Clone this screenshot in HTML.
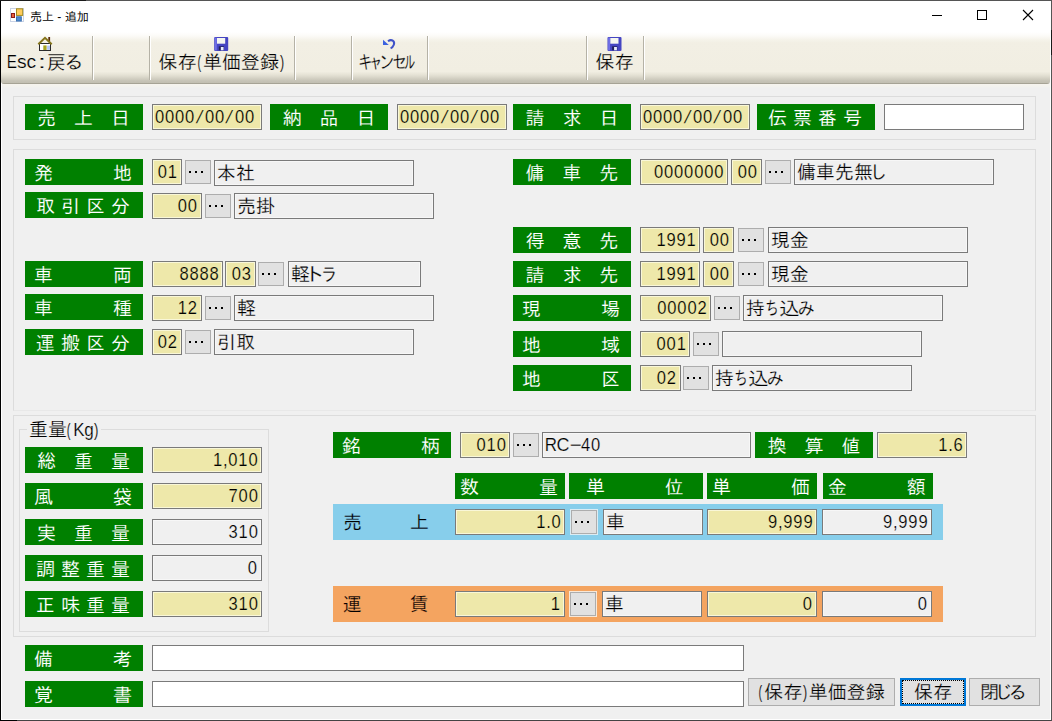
<!DOCTYPE html>
<html lang="ja">
<head>
<meta charset="utf-8">
<title>売上 - 追加</title>
<style>
*{margin:0;padding:0;box-sizing:border-box}
html,body{width:1052px;height:721px;overflow:hidden;background:#f0f0f0}
body{position:relative;font-family:"Liberation Sans","IPAGothic",sans-serif;font-size:19px;color:#000}
.a{position:absolute}
#win{position:absolute;left:0;top:0;width:1052px;height:721px;border:1px solid #555;border-left-color:#000;border-bottom-color:#444}
#win i{position:absolute;left:0;top:31px;width:1050px;height:688px;border:1px solid #fff;border-top:0}
#title{position:absolute;left:1px;top:1px;width:1050px;height:31px;background:#fff}
#title .t{position:absolute;left:29px;top:8px;font-size:12px;line-height:16px;white-space:pre}
#tb{position:absolute;left:1px;top:32px;width:1049px;height:52px;border-radius:0 0 3px 3px;
 background:linear-gradient(to bottom,#ffffff 0,#fcfbf8 7%,#f5f3ea 15%,#f2efe4 21%,#f1eee2 76%,#e4e1d4 83%,#d4d1c4 89%,#c6c3b6 94%,#c2bfb2 97.5%,#a6a395 98%,#a6a395 100%)}
.sep{position:absolute;top:36px;width:2px;height:44px;border-left:1px solid #b5b2a6;border-right:1px solid #fff}
.tbt{position:absolute;top:52px;height:22px;line-height:22px;white-space:nowrap;font-size:19px}
.gb{position:absolute;border:1px solid #dcdcdc}
.lb{position:absolute;height:26px;background:#008000;color:#fff;line-height:30px;white-space:pre;text-align:center;font-size:19px;word-spacing:.72px;overflow:hidden}
.in{position:absolute;height:26px;border:1px solid #7a7a7a;box-shadow:inset 0 0 0 1px #f9f7d8;background:#eee8aa;line-height:24px;white-space:pre;font-size:18px;overflow:hidden;padding:0 3px 0 2px}
.r{text-align:right}
.ro{background:#f0f0f0;box-shadow:inset 0 0 0 1px #f7f7f7}
.wh{background:#fff;box-shadow:none}
.tx{font-size:19px;line-height:25px}
.bt{position:absolute;height:24px;width:26px;border:1px solid #adadad;background:#e1e1e1}
.bt i{position:absolute;top:10px;width:2px;height:2px;background:#000}
.bb{position:absolute;height:28px;border:1px solid #adadad;background:#e1e1e1;line-height:27px;font-size:19px;white-space:nowrap}
.band{position:absolute;height:36px;left:333px;width:610px;line-height:38px;font-size:19px;white-space:pre;word-spacing:.72px}
body{-webkit-text-stroke:.2px #f0f0f0}
#title{-webkit-text-stroke:0}
.tbt{-webkit-text-stroke-color:#f1eee3}
.lb{-webkit-text-stroke:.1px #008000}
.in{-webkit-text-stroke:.2px #eee8aa}
.in.ro{-webkit-text-stroke-color:#f0f0f0}
.in.tx{-webkit-text-stroke-width:.2px}
.bb{-webkit-text-stroke-color:#e1e1e1}
.h{-webkit-text-stroke-width:.2px}
.d{display:inline-block;transform:scaleX(.92);letter-spacing:.87px;white-space:pre}
.r .d{transform-origin:100% 50%;margin-right:-.2px}
.dl{transform-origin:0 50%}
.k{display:inline-block;white-space:nowrap;transform-origin:0 50%}
.h{display:inline-block;white-space:nowrap;transform-origin:0 50%;font-size:18px}
.tbt .h,.bb .h{position:relative;top:-1px}
</style>
</head>
<body>
<div id="win"><i></i></div>
<div class="a" style="left:0;top:0;width:86px;height:1px;background:#1a1a1a"></div>
<div class="a" style="left:1051px;top:30px;width:1px;height:25px;background:#1a1a1a"></div>
<div class="a" style="left:0;top:720px;width:17px;height:1px;background:#000"></div>
<div id="title"><div class="t">売上 - 追加</div></div>
<div class="a" style="left:2px;top:84px;width:1048px;height:4px;background:linear-gradient(#f6f4ee,#f4f3ee 50%,#f0f0f0)"></div>
<div id="tb"></div>
<div class="sep" style="left:92px"></div>
<div class="sep" style="left:149px"></div>
<div class="sep" style="left:294px"></div>
<div class="sep" style="left:351px"></div>
<div class="sep" style="left:427px"></div>
<div class="sep" style="left:586px"></div>
<div class="sep" style="left:643px"></div>
<svg class="a" style="left:0;top:0" width="1052" height="90" viewBox="0 0 1052 90">
<g><rect x="10.5" y="8.5" width="13" height="13" fill="#fff" stroke="#c9d3e6"/>
<rect x="11.5" y="13.5" width="3" height="4" fill="#e8623a" stroke="#8b1a1a"/>
<rect x="16.5" y="8.8" width="6.2" height="6.6" fill="#ffcc5c" stroke="#a48b1e"/>
<rect x="16.5" y="16.8" width="4.8" height="4.2" fill="#4f8bd0" stroke="#3b70b0"/></g>
<g><rect x="39.5" y="43.5" width="11" height="7" fill="#fff" stroke="#2a2a2a"/>
<rect x="48.3" y="37" width="1.8" height="4.6" fill="#5a2d0c"/>
<path d="M38.3 44.2 L45 37.8 L51.7 44.2" fill="none" stroke="#85741a" stroke-width="2"/>
<rect x="43.3" y="45.4" width="3.3" height="4.6" fill="#a7a41f"/><rect x="47.1" y="45.6" width="2.9" height="4.2" fill="#b4c6f2"/></g>
<g transform="translate(214.2 37)"><rect x="0" y="0" width="14" height="14" rx="1" fill="#4545c2"/><rect x="0.6" y="0.6" width="2" height="12.8" fill="#6f6fe6"/><rect x="2.8" y="1" width="8.2" height="5.7" fill="#f4f6f0"/><rect x="4.6" y="9.3" width="5.2" height="4" fill="#20205a"/><rect x="6.6" y="10" width="2.8" height="3.3" fill="#e8ecff"/></g>
<g transform="translate(607.5 37)"><rect x="0" y="0" width="14" height="14" rx="1" fill="#4545c2"/><rect x="0.6" y="0.6" width="2" height="12.8" fill="#6f6fe6"/><rect x="2.8" y="1" width="8.2" height="5.7" fill="#f4f6f0"/><rect x="4.6" y="9.3" width="5.2" height="4" fill="#20205a"/><rect x="6.6" y="10" width="2.8" height="3.3" fill="#e8ecff"/></g>
<g><path d="M388 41.3 C391.5 38.6 395.2 41.2 393.8 44.8 C393.2 46.6 392 47.8 390.6 48.4" fill="none" stroke="#3f52c8" stroke-width="2"/>
<path d="M383 39.7 L383 44.9 L388.8 44.9 Z" fill="#3c62e0"/></g>
<g stroke="#000" stroke-width="1" fill="none"><path d="M932 15.5 H942"/><rect x="977.5" y="10.5" width="9" height="9"/><path d="M1023 10 L1033 20 M1033 10 L1023 20" stroke-width="1.1"/></g>
</svg>
<div class="tbt" style="left:7px"><span class="h" style="width:10px;transform:translateX(-0.35px) scaleX(0.85)">E</span><span class="h" style="width:10px;transform:translateX(-0.07px) scaleX(1.07)">s</span><span class="h" style="width:10px;transform:translateX(-0.57px) scaleX(1.07)">c</span><span class="h" style="width:9.5px;transform:translateX(0.67px) scaleX(1.67)">:</span>戻<span class="k" style="width:15px;transform:translateX(-2.12px) scaleX(1.04)">る</span></div>
<div class="tbt" style="left:158.5px">保存<span class="h" style="width:6.5px;transform:translateX(0.4px) scaleX(0.6)">(</span>単価登録<span class="h" style="width:6.5px;transform:translateX(1px) scaleX(0.7)">)</span></div>
<div class="tbt" style="left:358.8px"><span class="k" style="width:12.5px;transform:translateX(-1.02px) scaleX(0.76)">キ</span><span class="k" style="width:9.5px;transform:translateX(-2.07px) scaleX(0.72)">ャ</span><span class="k" style="width:12px;transform:translateX(-1.99px) scaleX(0.83)">ン</span><span class="k" style="width:12.3px;transform:translateX(-0.84px) scaleX(0.77)">セ</span><span class="k" style="width:10.5px;transform:translateX(-0.66px) scaleX(0.58)">ル</span></div>
<div class="tbt" style="left:595.5px">保存</div>
<div class="gb" style="left:13px;top:96px;width:1023px;height:44px"></div>
<div class="gb" style="left:13px;top:149px;width:1023px;height:262px;border-bottom-color:#e8e8e8"></div>
<div class="gb" style="left:13px;top:415px;width:1023px;height:222px"></div>
<div class="gb" style="left:19px;top:429px;width:250px;height:203px"></div>
<div class="a" style="left:27px;top:420px;width:74px;height:20px;background:#f0f0f0;line-height:20px;padding-left:2px;white-space:nowrap">重量<span class="h" style="width:6.5px;transform:translateX(-0.32px) scaleX(0.62)">(</span><span class="h" style="width:11px;transform:translateX(-0.74px) scaleX(0.94)">K</span><span class="h" style="width:9px;transform:translateX(-0.85px) scaleX(0.95)">g</span><span class="h" style="width:6.5px;transform:translateX(0.1px) scaleX(0.74)">)</span></div>
<div class="lb" style="left:25px;top:104px;width:118px;padding-right:1px">売   上   日</div>
<div class="in" style="left:152px;top:104px;width:110px;"><span class="d dl" style="margin-left:-.3px">0000<span class="h" style="width:10.87px;letter-spacing:0;transform:translateX(2px) skewX(-15deg);transform-origin:50% 50%">/</span>00<span class="h" style="width:10.87px;letter-spacing:0;transform:translateX(2px) skewX(-15deg);transform-origin:50% 50%">/</span>00</span></div>
<div class="lb" style="left:270px;top:104px;width:118px;">納   品   日</div>
<div class="in" style="left:397px;top:104px;width:110px;"><span class="d dl" style="margin-left:-.3px">0000<span class="h" style="width:10.87px;letter-spacing:0;transform:translateX(2px) skewX(-15deg);transform-origin:50% 50%">/</span>00<span class="h" style="width:10.87px;letter-spacing:0;transform:translateX(2px) skewX(-15deg);transform-origin:50% 50%">/</span>00</span></div>
<div class="lb" style="left:513px;top:104px;width:118px;">請   求   日</div>
<div class="in" style="left:640px;top:104px;width:110px;"><span class="d dl" style="margin-left:-.3px">0000<span class="h" style="width:10.87px;letter-spacing:0;transform:translateX(2px) skewX(-15deg);transform-origin:50% 50%">/</span>00<span class="h" style="width:10.87px;letter-spacing:0;transform:translateX(2px) skewX(-15deg);transform-origin:50% 50%">/</span>00</span></div>
<div class="lb" style="left:757px;top:104px;width:118px;padding-right:2px">伝 票 番 号</div>
<div class="in wh" style="left:884px;top:104px;width:140px;"></div>
<div class="lb" style="left:25px;top:159px;width:118px;padding-right:2px">発          地</div>
<div class="in r" style="left:152px;top:159px;width:30px;"><span class="d">01</span></div>
<div class="bt" style="left:185px;top:160px"><i style="left:3px"></i><i style="left:9px"></i><i style="left:15px"></i></div>
<div class="in ro tx" style="left:214px;top:160px;width:200px;">本社</div>
<div class="lb" style="left:25px;top:192px;width:118px;padding-right:2px">取 引 区 分</div>
<div class="in r" style="left:152px;top:193px;width:50px;"><span class="d">00</span></div>
<div class="bt" style="left:205px;top:194px"><i style="left:3px"></i><i style="left:9px"></i><i style="left:15px"></i></div>
<div class="in ro tx" style="left:234px;top:193px;width:200px;">売掛</div>
<div class="lb" style="left:25px;top:261px;width:118px;padding-right:2px">車          両</div>
<div class="in r" style="left:152px;top:261px;width:71px;"><span class="d">8888</span></div>
<div class="in r" style="left:225px;top:261px;width:31px;"><span class="d">03</span></div>
<div class="bt" style="left:258px;top:262px"><i style="left:3px"></i><i style="left:9px"></i><i style="left:15px"></i></div>
<div class="in ro tx" style="left:288px;top:261px;width:133px;">軽<span class="k" style="width:12px;transform:translateX(-6.56px) scaleX(1.14)">ト</span><span class="k" style="width:14px;transform:translateX(-0.67px) scaleX(0.84)">ラ</span></div>
<div class="lb" style="left:25px;top:294px;width:118px;padding-right:2px">車          種</div>
<div class="in r" style="left:152px;top:295px;width:50px;"><span class="d">12</span></div>
<div class="bt" style="left:205px;top:296px"><i style="left:3px"></i><i style="left:9px"></i><i style="left:15px"></i></div>
<div class="in ro tx" style="left:234px;top:295px;width:200px;">軽</div>
<div class="lb" style="left:25px;top:329px;width:118px;padding-right:2px">運 搬 区 分</div>
<div class="in r" style="left:152px;top:329px;width:30px;"><span class="d">02</span></div>
<div class="bt" style="left:185px;top:330px"><i style="left:3px"></i><i style="left:9px"></i><i style="left:15px"></i></div>
<div class="in ro tx" style="left:214px;top:329px;width:200px;">引取</div>
<div class="lb" style="left:513px;top:159px;width:118px;">傭   車   先</div>
<div class="in r" style="left:640px;top:159px;width:88px;"><span class="d">0000000</span></div>
<div class="in r" style="left:731px;top:159px;width:31px;"><span class="d">00</span></div>
<div class="bt" style="left:765px;top:160px"><i style="left:3px"></i><i style="left:9px"></i><i style="left:15px"></i></div>
<div class="in ro tx" style="left:794px;top:159px;width:200px;">傭車先無<span class="k" style="width:13px;transform:translateX(-3.82px) scaleX(0.96)">し</span></div>
<div class="lb" style="left:513px;top:227px;width:118px;">得   意   先</div>
<div class="in r" style="left:640px;top:227px;width:60px;"><span class="d">1991</span></div>
<div class="in r" style="left:703px;top:227px;width:31px;"><span class="d">00</span></div>
<div class="bt" style="left:738px;top:228px"><i style="left:3px"></i><i style="left:9px"></i><i style="left:15px"></i></div>
<div class="in ro tx" style="left:768px;top:227px;width:200px;">現金</div>
<div class="lb" style="left:513px;top:261px;width:118px;">請   求   先</div>
<div class="in r" style="left:640px;top:261px;width:60px;"><span class="d">1991</span></div>
<div class="in r" style="left:703px;top:261px;width:31px;"><span class="d">00</span></div>
<div class="bt" style="left:738px;top:262px"><i style="left:3px"></i><i style="left:9px"></i><i style="left:15px"></i></div>
<div class="in ro tx" style="left:768px;top:261px;width:200px;">現金</div>
<div class="lb" style="left:513px;top:295px;width:118px;padding-right:2px">現          場</div>
<div class="in r" style="left:640px;top:295px;width:71px;"><span class="d">00002</span></div>
<div class="bt" style="left:714px;top:296px"><i style="left:3px"></i><i style="left:9px"></i><i style="left:15px"></i></div>
<div class="in ro tx" style="left:743px;top:295px;width:200px;">持<span class="k" style="width:13.5px;transform:translateX(0.27px) scaleX(0.71)">ち</span><span class="k" style="width:19px;transform:translateX(0.12px) scaleX(1.08)">込</span><span class="k" style="width:17px;transform:translateX(-0.51px) scaleX(0.91)">み</span></div>
<div class="lb" style="left:513px;top:331px;width:118px;padding-right:2px">地          域</div>
<div class="in r" style="left:640px;top:331px;width:50px;"><span class="d">001</span></div>
<div class="bt" style="left:693px;top:332px"><i style="left:3px"></i><i style="left:9px"></i><i style="left:15px"></i></div>
<div class="in ro tx" style="left:722px;top:331px;width:200px;"></div>
<div class="lb" style="left:513px;top:365px;width:118px;padding-right:2px">地          区</div>
<div class="in r" style="left:640px;top:365px;width:41px;"><span class="d">02</span></div>
<div class="bt" style="left:683px;top:366px"><i style="left:3px"></i><i style="left:9px"></i><i style="left:15px"></i></div>
<div class="in ro tx" style="left:712px;top:365px;width:200px;">持<span class="k" style="width:13.5px;transform:translateX(0.27px) scaleX(0.71)">ち</span><span class="k" style="width:19px;transform:translateX(0.12px) scaleX(1.08)">込</span><span class="k" style="width:17px;transform:translateX(-0.51px) scaleX(0.91)">み</span></div>
<div class="lb" style="left:25px;top:447px;width:118px;padding-right:1px">総   重   量</div>
<div class="in r" style="left:152px;top:447px;width:110px;"><span class="d">1,010</span></div>
<div class="lb" style="left:25px;top:483px;width:118px;padding-right:2px">風          袋</div>
<div class="in r" style="left:152px;top:483px;width:110px;"><span class="d">700</span></div>
<div class="lb" style="left:25px;top:519px;width:118px;padding-right:1px">実   重   量</div>
<div class="in r ro" style="left:152px;top:519px;width:110px;"><span class="d">310</span></div>
<div class="lb" style="left:25px;top:555px;width:118px;padding-right:2px">調 整 重 量</div>
<div class="in r ro" style="left:152px;top:555px;width:110px;"><span class="d">0</span></div>
<div class="lb" style="left:25px;top:591px;width:118px;padding-right:2px">正 味 重 量</div>
<div class="in r" style="left:152px;top:591px;width:110px;"><span class="d">310</span></div>
<div class="lb" style="left:333px;top:432px;width:118px;padding-right:2px">銘          柄</div>
<div class="in r" style="left:460px;top:432px;width:50px;"><span class="d">010</span></div>
<div class="bt" style="left:513px;top:433px"><i style="left:3px"></i><i style="left:9px"></i><i style="left:15px"></i></div>
<div class="in ro" style="left:542px;top:432px;width:209px;"><span class="h" style="width:12px;transform:translateX(-0.24px) scaleX(0.94)">R</span><span class="h" style="width:12.5px;transform:translateX(-0.6px) scaleX(1)">C</span><span class="h" style="width:11.5px;transform:translateX(-0.23px) scaleX(1.13)">−</span><span class="d dl">40</span></div>
<div class="lb" style="left:755px;top:432px;width:118px;">換   算   値</div>
<div class="in r" style="left:877px;top:432px;width:90px;"><span class="d">1.6</span></div>
<div class="lb" style="left:455px;top:473px;width:110px;padding-right:2px">数          量</div>
<div class="lb" style="left:569px;top:473px;width:134px;padding-right:2px">単          位</div>
<div class="lb" style="left:707px;top:473px;width:110px;padding-right:2px">単          価</div>
<div class="lb" style="left:823px;top:473px;width:110px;padding-right:2px">金          額</div>
<div class="band" style="top:504px;background:#87ceeb;-webkit-text-stroke-color:#87ceeb"><span class="a" style="left:10px">売        上</span></div>
<div class="in r" style="left:455px;top:509px;width:110px;"><span class="d">1.0</span></div>
<div class="bt" style="left:571px;top:510px;box-shadow:0 0 0 1px #dcecf3"><i style="left:3px"></i><i style="left:9px"></i><i style="left:15px"></i></div>
<div class="in ro tx" style="left:603px;top:509px;width:100px;">車</div>
<div class="in r" style="left:707px;top:509px;width:110px;"><span class="d">9,999</span></div>
<div class="in r ro" style="left:822px;top:509px;width:110px;"><span class="d">9,999</span></div>
<div class="band" style="top:586px;background:#f4a460;-webkit-text-stroke-color:#f4a460"><span class="a" style="left:10px">運        賃</span></div>
<div class="in r" style="left:455px;top:591px;width:110px;"><span class="d">1</span></div>
<div class="bt" style="left:570px;top:592px;box-shadow:0 0 0 1px #f8e8d8"><i style="left:3px"></i><i style="left:9px"></i><i style="left:15px"></i></div>
<div class="in ro tx" style="left:602px;top:591px;width:100px;">車</div>
<div class="in r" style="left:707px;top:591px;width:110px;"><span class="d">0</span></div>
<div class="in r ro" style="left:822px;top:591px;width:110px;"><span class="d">0</span></div>
<div class="lb" style="left:25px;top:645px;width:118px;padding-right:2px">備          考</div>
<div class="in wh" style="left:152px;top:645px;width:592px;"></div>
<div class="lb" style="left:25px;top:681px;width:118px;padding-right:2px">覚          書</div>
<div class="in wh" style="left:152px;top:681px;width:592px;"></div>
<div class="bb" style="left:748px;top:678px;width:147px;padding-left:8.7px"><span class="h" style="width:6.5px;transform:translateX(0.4px) scaleX(0.6)">(</span>保存<span class="h" style="width:6.5px;transform:translateX(1px) scaleX(0.7)">)</span>単価登録</div>
<div class="bb" style="left:900px;top:678px;width:66px;border:2px solid #0078d7;line-height:25px;padding-left:12px;outline:1px dotted #000;outline-offset:-3px">保存</div>
<div class="bb" style="left:969px;top:678px;width:71px;padding-left:10px">閉<span class="k" style="width:11.5px;transform:translateX(-4.95px) scaleX(0.99)">じ</span><span class="k" style="width:15px;transform:translateX(-2.78px) scaleX(0.99)">る</span></div>
</body>
</html>
